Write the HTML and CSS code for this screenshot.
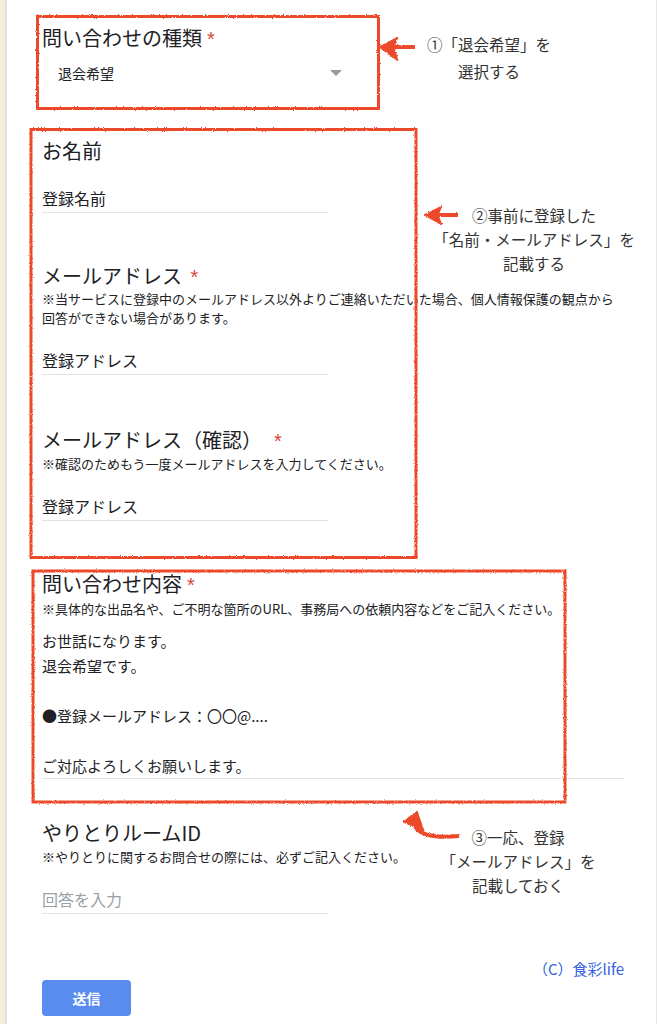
FILE: index.html
```html
<!DOCTYPE html>
<html lang="ja">
<head>
<meta charset="utf-8">
<title>お問い合わせ</title>
<link rel="stylesheet" href="styles.css">
</head>
<body>
<div class="shell">
  <div class="edge"></div>
  <main class="form">
    <section class="q">
      <h2 class="q-title">問い合わせの種類<span class="req tight">*</span></h2>
      <div class="select"><span>退会希望</span><span class="caret"></span></div>
    </section>

    <section class="q q-name">
      <h2 class="q-title">お名前</h2>
      <div class="answer">登録名前</div>
    </section>

    <section class="q q-mail">
      <h2 class="q-title">メールアドレス <span class="req">*</span></h2>
      <p class="note">※当サービスに登録中のメールアドレス以外よりご連絡いただいた場合、個人情報保護の観点から<br>回答ができない場合があります。</p>
      <div class="answer">登録アドレス</div>
    </section>

    <section class="q q-mail2">
      <h2 class="q-title">メールアドレス（確認）<span class="req wide">*</span></h2>
      <p class="note">※確認のためもう一度メールアドレスを入力してください。</p>
      <div class="answer">登録アドレス</div>
    </section>

    <section class="q q-body">
      <h2 class="q-title">問い合わせ内容<span class="req tight">*</span></h2>
      <p class="note">※具体的な出品名や、ご不明な箇所のURL、事務局への依頼内容などをご記入ください。</p>
      <div class="textarea">お世話になります。
退会希望です。

●登録メールアドレス：〇〇@....

ご対応よろしくお願いします。</div>
    </section>

    <section class="q q-room">
      <h2 class="q-title">やりとりルームID</h2>
      <p class="note">※やりとりに関するお問合せの際には、必ずご記入ください。</p>
      <div class="answer placeholder">回答を入力</div>
    </section>

    <p class="copy">（C）食彩life</p>
    <button class="submit" type="button">送信</button>
  </main>

  <svg class="marks" width="659" height="1024" viewBox="0 0 659 1024" aria-hidden="true">
    <defs>
      <filter id="rough" x="-5%" y="-5%" width="110%" height="110%">
        <feTurbulence type="fractalNoise" baseFrequency="0.9" numOctaves="2" seed="3" result="n"/>
        <feDisplacementMap in="SourceGraphic" in2="n" scale="2.5" xChannelSelector="R" yChannelSelector="G"/>
      </filter>
    </defs>
    <g class="ink" filter="url(#rough)">
      <rect x="37.5" y="16.5" width="341" height="92" fill="none" stroke-width="3"/>
      <rect x="31" y="129.5" width="385" height="428" fill="none" stroke-width="3"/>
      <rect x="33" y="571" width="532" height="231" fill="none" stroke-width="3"/>
      <line x1="415" y1="47" x2="392" y2="47" stroke-width="4"/>
      <polygon points="379,47 398,37 394,47 398,61" stroke-width="1"/>
      <line x1="458" y1="215" x2="437" y2="215" stroke-width="4"/>
      <polygon points="424,215 442,206 438,215 442,225" stroke-width="1"/>
      <path d="M415 826 C420 836 438 838 459 836" fill="none" stroke-width="4"/>
      <polygon points="403,822 417,811 424,831" stroke-width="1"/>
    </g>
  </svg>

  <div class="tip tip1">①「退会希望」を<br>選択する</div>
  <div class="tip tip2">②事前に登録した<br>「名前・メールアドレス」を<br>記載する</div>
  <div class="tip tip3">③一応、登録<br>「メールアドレス」を<br>記載しておく</div>
</div>
</body>
</html>
```

FILE: styles.css
```css
* { box-sizing: border-box; }

html, body {
  margin: 0;
  padding: 0;
  background: #ffffff;
}

body {
  font-family: "Noto Sans CJK JP", "Noto Sans", "Liberation Sans", sans-serif;
  color: #202124;
}

.shell {
  position: relative;
  display: flex;
  width: 659px;
  height: 1024px;
  overflow: hidden;
}

.edge {
  flex: 0 0 7px;
  background: #f7ecd8;
  border-right: 2px solid #e2ddd5;
}

.form {
  flex: 0 0 650px;
  padding-left: 35px;
  border-right: 1px solid #e6e6e6;
}

.q-title {
  margin: 0;
  font-size: 20px;
  line-height: 24px;
  font-weight: 400;
  color: #202124;
}

.req {
  color: #d9473c;
  font-family: "Liberation Sans", sans-serif;
  font-size: 20px;
  margin-left: 4px;
}
.req.tight { margin-left: 5px; }
.req.wide { margin-left: 12px; }

.q:first-child .q-title { margin-top: 26px; }

.select {
  display: flex;
  justify-content: space-between;
  align-items: center;
  width: 300px;
  margin-top: 12px;
  padding-left: 16px;
  font-size: 14px;
  line-height: 20px;
  color: #202124;
}

.caret {
  width: 0;
  height: 0;
  border-left: 6px solid transparent;
  border-right: 6px solid transparent;
  border-top: 6px solid #9a9a9a;
}

.q-name .q-title { margin-top: 56px; }
.q-mail .q-title { margin-top: 51px; }
.q-mail2 .q-title { margin-top: 53px; }
.q-body .q-title { margin-top: 51px; }
.q-room .q-title { margin-top: 42px; }

.note {
  margin: 0;
  font-size: 13px;
  line-height: 19px;
  color: #202124;
}
.q-mail2 .note { margin-top: 1px; }
.q-body .note, .q-room .note { margin-top: 2px; }

.answer {
  width: 286px;
  margin-top: 22px;
  font-size: 16px;
  line-height: 22px;
  padding-bottom: 3px;
  border-bottom: 1px solid #e3e3e3;
  color: #202124;
}
.q-name .answer { margin-top: 24px; }
.q-room .answer { margin-top: 22px; }

.answer.placeholder { color: #9aa0a6; }

.textarea {
  width: 582px;
  margin-top: 10px;
  font-size: 15px;
  line-height: 25px;
  white-space: pre-line;
  border-bottom: 1px solid #e3e3e3;
  color: #202124;
}

.copy {
  margin: 45px 32px 0 0;
  text-align: right;
  font-size: 15px;
  line-height: 20px;
  color: #3560e6;
}

.submit {
  display: block;
  margin-top: 1px;
  width: 89px;
  height: 36px;
  border: none;
  border-radius: 4px;
  background: #5a8bee;
  color: #ffffff;
  font-family: "Noto Sans CJK JP", "Noto Sans", sans-serif;
  font-size: 14px;
  font-weight: 700;
}

.marks {
  position: absolute;
  left: 0;
  top: 0;
  pointer-events: none;
}
.ink { stroke: #ec4a2b; fill: #ec4a2b; }
.ink rect, .ink path { fill: none; }

.tip {
  position: absolute;
  text-align: center;
  font-size: 15.5px;
  color: #333333;
}
.tip1 { left: 409px; top: 31px; width: 160px; line-height: 27px; }
.tip2 { left: 424px; top: 203px; width: 220px; line-height: 24px; }
.tip3 { left: 418px; top: 825px; width: 200px; line-height: 24px; }
```
